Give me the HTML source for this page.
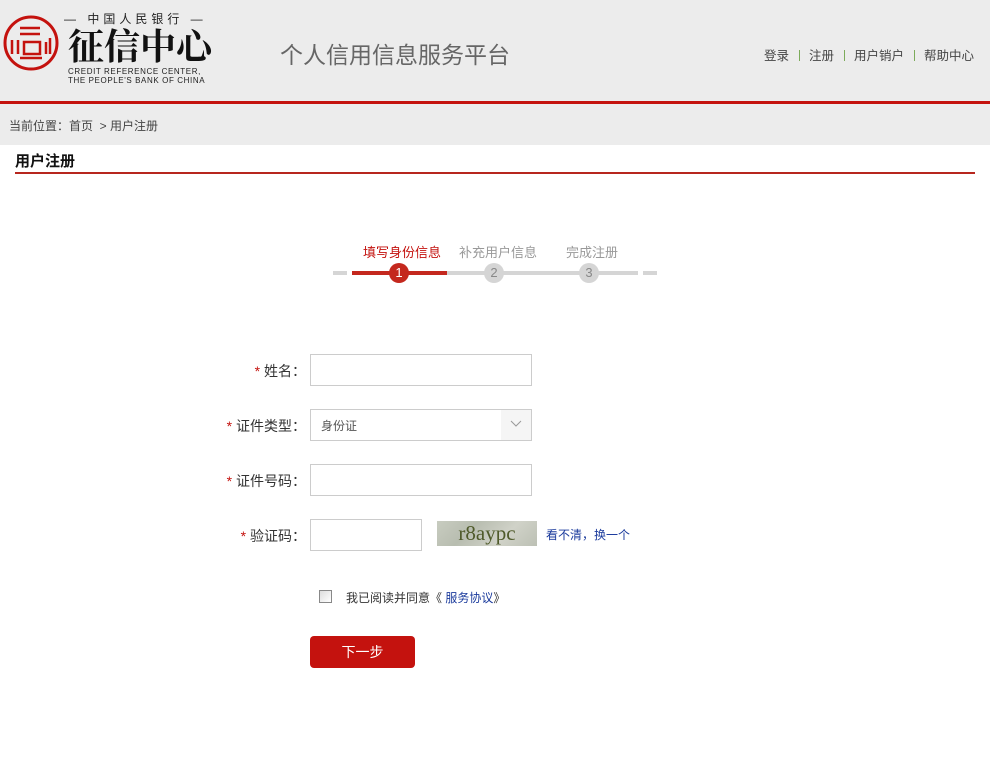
<!DOCTYPE html>
<html><head><meta charset="utf-8"><style>
*{margin:0;padding:0;box-sizing:border-box}
body{width:990px;height:765px;background:#fff;font-family:"Liberation Sans","Noto Sans CJK SC",sans-serif;font-size:13px;color:#333;position:relative;overflow:hidden}
.a{position:absolute}
.hd{left:0;top:0;width:990px;height:101px;background:#ececec}
.red{left:0;top:101px;width:990px;height:3px;background:#c4120e}
.bc{left:0;top:104px;width:990px;height:41px;background:#ececec;font-size:12px;color:#444;padding:13px 0 0 9px}
.nav{top:45px;left:764px;font-size:12.5px;color:#444;white-space:nowrap}
.nav i{display:inline-block;width:1px;height:11px;background:#7cab5a;margin:0 9px 0 10px;vertical-align:-1px}
.lbl{font-size:14px;color:#333;text-align:right;width:116px;left:190px}
.lbl b{color:#c4120e;font-weight:normal}
.in{border:1px solid #ccc;background:#fff;height:32px}
.st{font-size:13px;color:#999;top:242px}
</style></head><body>
<div class="a hd"></div>
<svg class="a" style="left:2px;top:14px" width="60" height="60" viewBox="0 0 60 60">
<circle cx="29" cy="29" r="26" fill="none" stroke="#c4120e" stroke-width="3"/>
<g stroke="#c4120e" stroke-width="2.5" fill="none">
<path d="M18 14h20M18 20h20M10 26v14M16 26v14M18 44h22M44 28v12M48 24v16"/>
<rect x="22" y="28" width="16" height="12"/>
</g></svg>
<div class="a" style="left:64px;top:10px;font-size:12px;color:#222;letter-spacing:4px;white-space:nowrap">— 中国人民银行 —</div>
<div class="a" style="left:68px;top:24px;font-size:36px;line-height:42px;color:#111;font-family:'Noto Serif CJK SC',serif;letter-spacing:0;font-weight:bold">征信中心</div>
<div class="a" style="left:68px;top:67px;font-size:8px;line-height:9px;color:#222;letter-spacing:0.6px;white-space:nowrap">CREDIT REFERENCE CENTER,<br>THE PEOPLE'S BANK OF CHINA</div>
<div class="a" style="left:280px;top:36px;font-size:23px;color:#666">个人信用信息服务平台</div>
<div class="a nav">登录<i></i>注册<i></i>用户销户<i></i>帮助中心</div>
<div class="a red"></div>
<div class="a bc">当前位置：首页 &nbsp;&gt; 用户注册</div>
<div class="a" style="left:15px;top:150px;font-size:15px;font-weight:bold;color:#111">用户注册</div>
<div class="a" style="left:15px;top:172px;width:960px;height:2px;background:#b7261e"></div>

<div class="a st" style="left:363px;color:#c4120e">填写身份信息</div>
<div class="a st" style="left:459px">补充用户信息</div>
<div class="a st" style="left:566px">完成注册</div>
<div class="a" style="left:333px;top:271px;width:14px;height:4px;background:#d5d5d5"></div>
<div class="a" style="left:352px;top:271px;width:95px;height:4px;background:#c4281e"></div>
<div class="a" style="left:447px;top:271px;width:191px;height:4px;background:#d5d5d5"></div>
<div class="a" style="left:643px;top:271px;width:14px;height:4px;background:#d5d5d5"></div>
<div class="a" style="left:389px;top:263px;width:20px;height:20px;border-radius:50%;background:#c4281e;color:#fff;text-align:center;line-height:20px;font-size:13px">1</div>
<div class="a" style="left:484px;top:263px;width:20px;height:20px;border-radius:50%;background:#d5d5d5;color:#888;text-align:center;line-height:20px;font-size:13px">2</div>
<div class="a" style="left:579px;top:263px;width:20px;height:20px;border-radius:50%;background:#d5d5d5;color:#888;text-align:center;line-height:20px;font-size:13px">3</div>

<div class="a lbl" style="top:361px"><b>*</b> 姓名：</div>
<div class="a in" style="left:310px;top:354px;width:222px"></div>
<div class="a lbl" style="top:416px"><b>*</b> 证件类型：</div>
<div class="a in" style="left:310px;top:409px;width:222px;font-size:12px;color:#555;padding:7px 0 0 10px">身份证
<div class="a" style="left:190px;top:0;width:30px;height:30px;background:#f5f5f5"></div>
<svg class="a" style="left:199px;top:10px" width="12" height="8"><path d="M1 1l5 5 5-5" stroke="#999" fill="none"/></svg></div>
<div class="a lbl" style="top:471px"><b>*</b> 证件号码：</div>
<div class="a in" style="left:310px;top:464px;width:222px"></div>
<div class="a lbl" style="top:526px"><b>*</b> 验证码：</div>
<div class="a in" style="left:310px;top:519px;width:112px"></div>
<div class="a" style="left:437px;top:521px;width:100px;height:25px;background:linear-gradient(135deg,#c8ccc0,#b8bdb0,#d0d2c8,#bcc0b4);font-family:'Liberation Serif',serif;font-size:21px;color:#4f5a2a;text-align:center;line-height:25px">r8aypc</div>
<div class="a" style="left:546px;top:526px;font-size:12px;color:#1a3a9c">看不清，换一个</div>
<div class="a" style="left:319px;top:590px;width:13px;height:13px;border:1px solid #888;background:linear-gradient(135deg,#ddd,#fff)"></div>
<div class="a" style="left:346px;top:589px;font-size:12px;color:#333">我已阅读并同意《 <span style="color:#1a3a9c">服务协议</span>》</div>
<div class="a" style="left:310px;top:636px;width:105px;height:32px;background:#c4120e;border-radius:4px;color:#fff;font-size:14px;text-align:center;line-height:32px">下一步</div>
</body></html>
